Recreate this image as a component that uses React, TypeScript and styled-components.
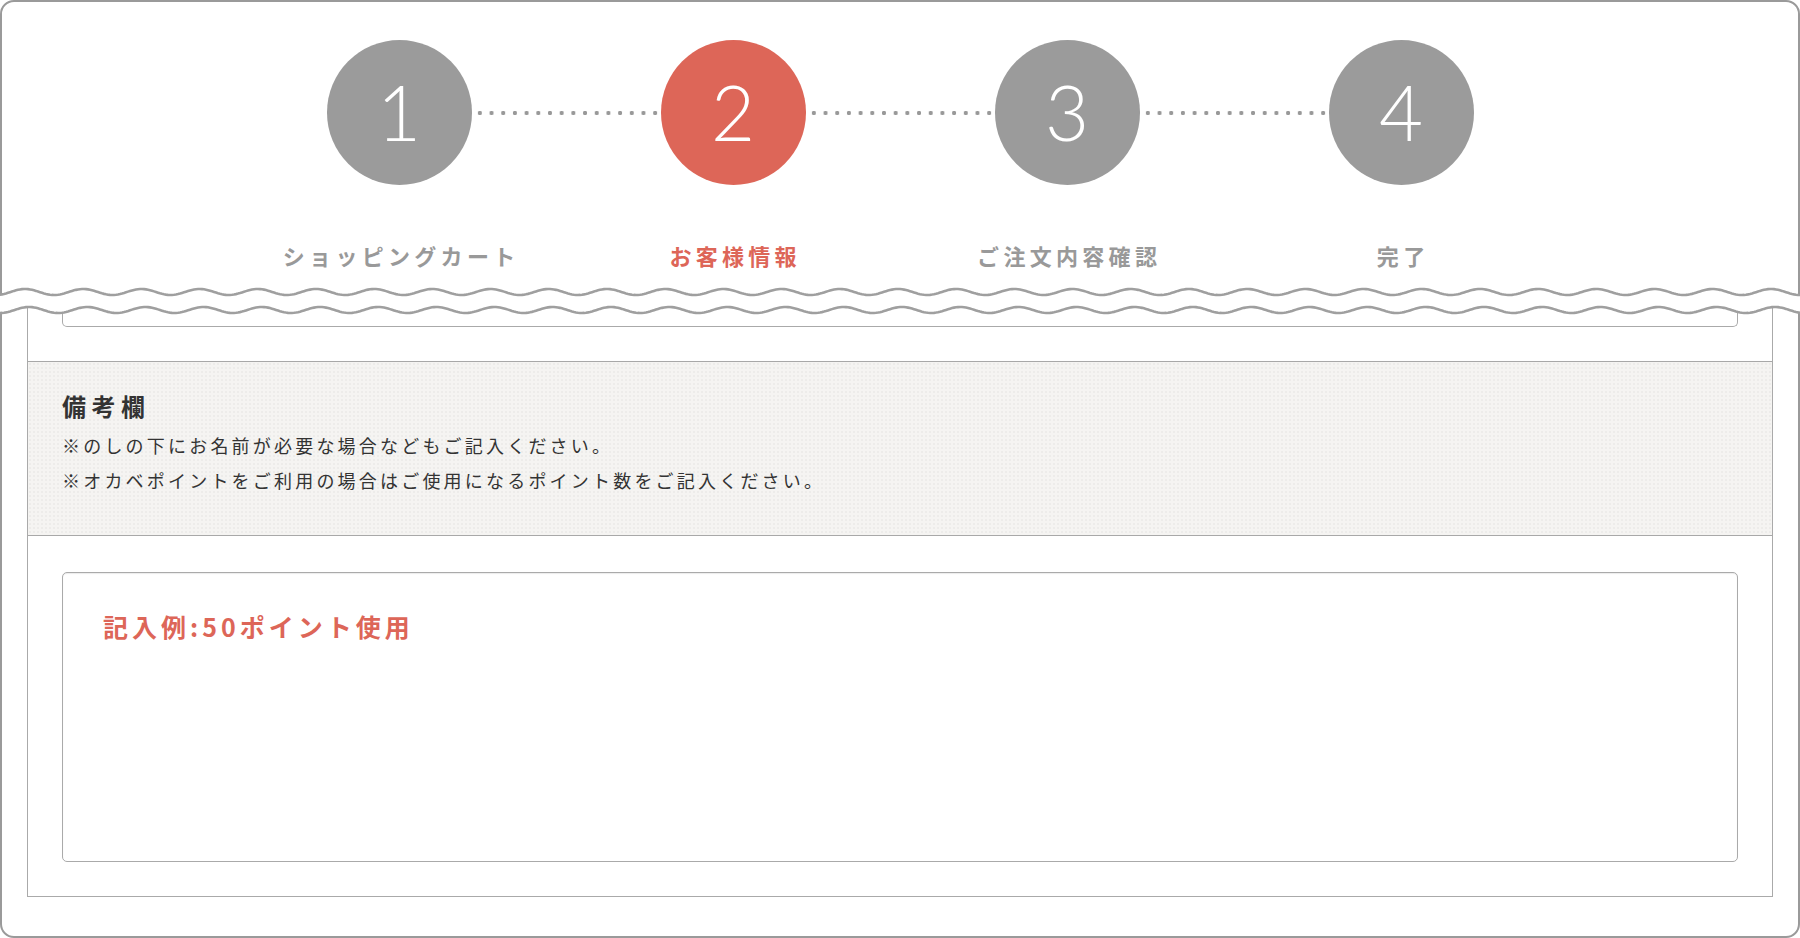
import React from "react";
import styled, { createGlobalStyle } from "styled-components";

const GlobalStyle = createGlobalStyle`
  html, body { margin: 0; padding: 0; background: #ffffff; }
  body { font-family: "Noto Sans CJK JP", "Noto Sans", sans-serif; }
  * { box-sizing: border-box; }
`;

const Frame = styled.div`
  width: 1800px;
  height: 938px;
  border: 2px solid #9a9a9a;
  border-radius: 14px;
  background: #ffffff;
  display: flex;
  flex-direction: column;
`;

const Header = styled.header`
  flex: none;
  height: 280px;
  padding-top: 38px;
`;

const StepRow = styled.div`
  width: 1147px;
  margin: 0 auto;
  display: flex;
  align-items: center;
`;

const Circle = styled.div<{ $active?: boolean }>`
  flex: none;
  width: 145px;
  height: 145px;
  border-radius: 50%;
  background: ${(p) => (p.$active ? "#dd6658" : "#9b9b9b")};
  color: #ffffff;
  display: flex;
  align-items: center;
  justify-content: center;
  font-family: Lato, "Noto Sans", sans-serif;
  font-weight: 300;
  font-size: 76px;
  line-height: 1;
  padding-bottom: 2px;
`;

const Connector = styled.div`
  flex: 1;
  height: 6px;
  background-image: radial-gradient(circle, #999999 1.9px, transparent 2.4px);
  background-size: 11.7px 6px;
  background-repeat: repeat-x;
  background-position: 0px 0px;
  margin: 0 2px 0 2px;
`;

const LabelRow = styled.div`
  display: grid;
  grid-template-columns: repeat(4, 334px);
  justify-content: center;
  margin-top: 54px;
`;

const Label = styled.div<{ $active?: boolean }>`
  text-align: center;
  font-size: 22px;
  line-height: 33px;
  font-weight: 700;
  letter-spacing: 4.3px;
  padding-left: 4.3px;
  color: ${(p) => (p.$active ? "#dd6658" : "#999999")};
`;

const WaveSvg = styled.svg`
  flex: none;
  display: block;
  width: 1800px;
  height: 38px;
  margin: 0 -2px;
  position: relative;
  z-index: 1;
`;

const Panel = styled.section`
  flex: none;
  margin: -14px 25px 0 25px;
  border: 1px solid #aaaaaa;
  border-top: none;
  padding-bottom: 34px;
`;

const PrevBox = styled.div`
  height: 21px;
  margin: 0 34px;
  border: 1px solid #aaaaaa;
  border-top: none;
  border-radius: 0 0 5px 5px;
`;

const NoteSection = styled.div`
  margin-top: 34px;
  border-top: 1px solid #a8a8a8;
  border-bottom: 1px solid #a8a8a8;
  background-color: #f5f4f2;
  background-image: radial-gradient(rgba(0, 0, 0, 0.03) 0.7px, transparent 1px);
  background-size: 4px 4px;
  padding: 29px 34px 38px 34px;
  color: #333333;
`;

const NoteTitle = styled.h3`
  margin: 0 0 7px 0;
  font-size: 24px;
  line-height: 30px;
  font-weight: 700;
  letter-spacing: 5.5px;
`;

const NoteLine = styled.p`
  margin: 0;
  font-size: 18px;
  line-height: 34.5px;
  letter-spacing: 3.2px;
`;

const TextArea = styled.textarea`
  display: block;
  width: calc(100% - 68px);
  height: 290px;
  margin: 36px 34px 0 34px;
  border: 1px solid #aaaaaa;
  border-radius: 5px;
  box-shadow: inset 0 1px 1px rgba(0, 0, 0, 0.08);
  padding: 37px 40px;
  resize: none;
  outline: none;
  font-family: "Noto Sans CJK JP", "Noto Sans", sans-serif;
  font-size: 25px;
  line-height: 33px;
  letter-spacing: 4px;
  color: #333333;
  background: #ffffff;
  &::placeholder {
    color: #dd6658;
    font-weight: 700;
    opacity: 1;
  }
`;

const steps = [
  { n: "1", label: "ショッピングカート" },
  { n: "2", label: "お客様情報", active: true },
  { n: "3", label: "ご注文内容確認" },
  { n: "4", label: "完了" },
];

function wavePoints(y0: number, amp: number, period: number, peak: number, width: number) {
  const pts: [number, number][] = [];
  for (let x = -4; x <= width + 4; x += 2) {
    const y = y0 - amp * Math.cos((2 * Math.PI * (x - peak)) / period);
    pts.push([x, y]);
  }
  return pts;
}

const toLine = (pts: [number, number][]) =>
  pts.map((p, i) => `${i === 0 ? "M" : "L"}${p[0].toFixed(1)} ${p[1].toFixed(2)}`).join(" ");

const Wave: React.FC = () => {
  const W = 1800;
  const top = wavePoints(10, 3, 58.2, 25, W);
  const bottom = wavePoints(28, 3, 58.2, 29, W);
  const fill =
    toLine(top) +
    " " +
    bottom
      .slice()
      .reverse()
      .map((p) => `L${p[0].toFixed(1)} ${p[1].toFixed(2)}`)
      .join(" ") +
    " Z";
  return (
    <WaveSvg viewBox={`0 0 ${W} 38`} preserveAspectRatio="none" aria-hidden="true">
      <path d={fill} fill="#ffffff" />
      <path d={toLine(top)} fill="none" stroke="#9f9f9f" strokeWidth={2.6} />
      <path d={toLine(bottom)} fill="none" stroke="#9f9f9f" strokeWidth={2.6} />
    </WaveSvg>
  );
};

export default function App() {
  return (
    <>
      <GlobalStyle />
      <Frame>
        <Header>
          <StepRow>
            {steps.map((s, i) => (
              <React.Fragment key={s.n}>
                <Circle $active={s.active}>{s.n}</Circle>
                {i < steps.length - 1 && <Connector />}
              </React.Fragment>
            ))}
          </StepRow>
          <LabelRow>
            {steps.map((s) => (
              <Label key={s.n} $active={s.active}>
                {s.label}
              </Label>
            ))}
          </LabelRow>
        </Header>
        <Wave />
        <Panel>
          <PrevBox />
          <NoteSection>
            <NoteTitle>備考欄</NoteTitle>
            <NoteLine>※のしの下にお名前が必要な場合などもご記入ください。</NoteLine>
            <NoteLine>※オカベポイントをご利用の場合はご使用になるポイント数をご記入ください。</NoteLine>
          </NoteSection>
          <TextArea placeholder="記入例:50ポイント使用" />
        </Panel>
      </Frame>
    </>
  );
}
